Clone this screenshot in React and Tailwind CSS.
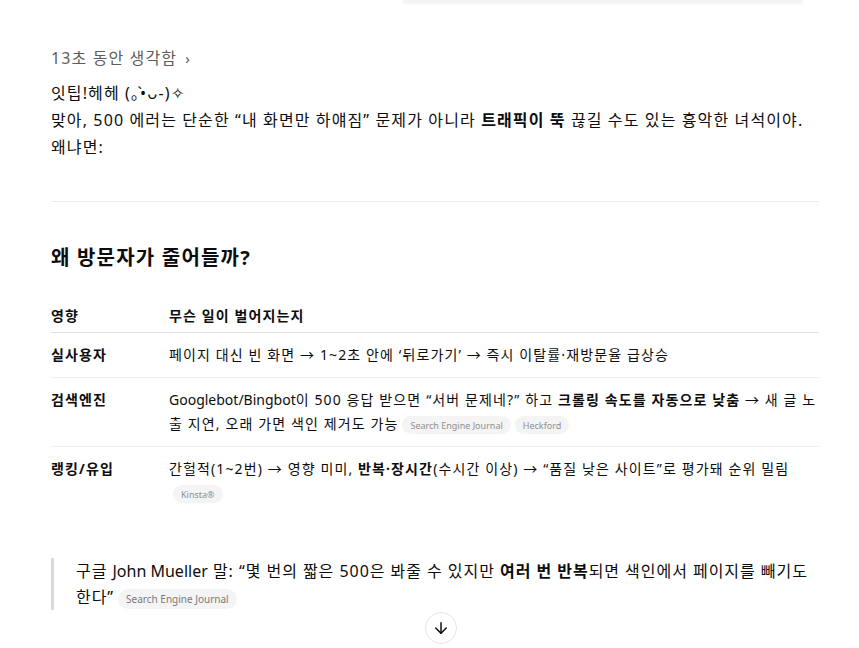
// App.jsx

// React Icons
import { FiArrowDown } from 'react-icons/fi';

const font = { fontFamily: '"Noto Sans", "Noto Sans CJK KR", sans-serif' };

// Small source chip
function Chip({ children, big }) {
  return (
    <span
      className={
        big
          ? 'ml-1 inline-flex h-[20px] items-center rounded-full bg-[#f4f4f4] px-2 align-middle text-[10px] leading-none tracking-normal text-[#7a7a7a]'
          : 'ml-1 inline-flex h-[18px] items-center rounded-full bg-[#f4f4f4] px-2 align-middle text-[9px] leading-none tracking-normal text-[#8f8f8f]'
      }
    >
      {children}
    </span>
  );
}

export default function App() {
  return (
    <div className="relative min-h-screen bg-white text-[#0d0d0d] tracking-[0.07em]" style={font}>
      <div className="ml-[51px] w-[768px] pb-[40px]">
        {/* User bubble bottom edge */}
        <div className="ml-auto mr-4 h-[3px] w-[400px] rounded-b-lg bg-[#f4f4f4] shadow-[0_1px_1px_rgba(0,0,0,0.04)]" />

        {/* Thought toggle */}
        <div className="mt-[43px] flex items-center gap-1 text-[16px] leading-6 text-[#5d5d5d]">
          13초 동안 생각함
          <span className="ml-1 text-[15px]">›</span>
        </div>

        {/* Intro */}
        <div className="mt-[10px] text-[16px] leading-[27px]">
          <p>잇팁!헤헤 (｡•̀ᴗ-)✧</p>
          <p>
            맞아, 500 에러는 단순한 “내 화면만 하얘짐” 문제가 아니라 <strong className="font-bold">트래픽이 뚝</strong> 끊길 수도 있는 흉악한 녀석이야.
          </p>
          <p>왜냐면:</p>
        </div>

        <hr className="mt-[40px] border-[#ececec]" />

        <h2 className="mt-[42px] text-[20px] font-bold leading-7 tracking-[0.06em]">왜 방문자가 줄어들까?</h2>

        {/* Table */}
        <table className="mt-[24px] w-full border-collapse text-left text-[14px] leading-6 tracking-[0.08em]">
          <thead>
            <tr className="border-b border-[#e3e3e3]">
              <th className="w-[118px] pb-[4px] pt-[8px] font-bold">영향</th>
              <th className="pb-[4px] pt-[8px] font-bold">무슨 일이 벌어지는지</th>
            </tr>
          </thead>
          <tbody>
            <tr className="border-b border-[#f0f0f0]">
              <td className="py-[10px] align-top font-bold">실사용자</td>
              <td className="py-[10px]">페이지 대신 빈 화면 → 1~2초 안에 ‘뒤로가기’ → 즉시 이탈률·재방문율 급상승</td>
            </tr>
            <tr className="border-b border-[#f0f0f0]">
              <td className="py-[10px] align-top font-bold">검색엔진</td>
              <td className="py-[10px]">
                <span className="tracking-normal">Googlebot/Bingbot</span>이 500 응답 받으면 “서버 문제네?” 하고 <strong className="font-bold">크롤링 속도를 자동으로 낮춤</strong> → 새 글 노출 지연, 오래 가면 색인 제거도 가능
                <Chip>Search Engine Journal</Chip>
                <Chip>Heckford</Chip>
              </td>
            </tr>
            <tr>
              <td className="py-[10px] align-top font-bold">랭킹/유입</td>
              <td className="py-[10px]">
                간헐적(1~2번) → 영향 미미, <strong className="font-bold">반복·장시간</strong>(수시간 이상) → “품질 낮은 사이트”로 평가돼 순위 밀림
                <br />
                <Chip>Kinsta®</Chip>
              </td>
            </tr>
          </tbody>
        </table>

        {/* Quote */}
        <blockquote className="mt-[43px] border-l-[3px] border-[#d9d9d9] pl-[22px] text-[16px] leading-[26px] tracking-[0.06em]">
          구글 <span className="tracking-normal">John Mueller</span> 말: “몇 번의 짧은 500은 봐줄 수 있지만 <strong className="font-bold">여러 번 반복</strong>되면 색인에서 페이지를 빼기도 한다”
          <Chip big>Search Engine Journal</Chip>
        </blockquote>
      </div>

      {/* Scroll to bottom */}
      <button className="absolute left-[425px] top-[612px] flex h-8 w-8 items-center justify-center rounded-full border border-[#e5e5e5] bg-white text-[#0d0d0d]">
        <FiArrowDown className="h-[18px] w-[18px]" strokeWidth={2} />
      </button>
    </div>
  );
}
